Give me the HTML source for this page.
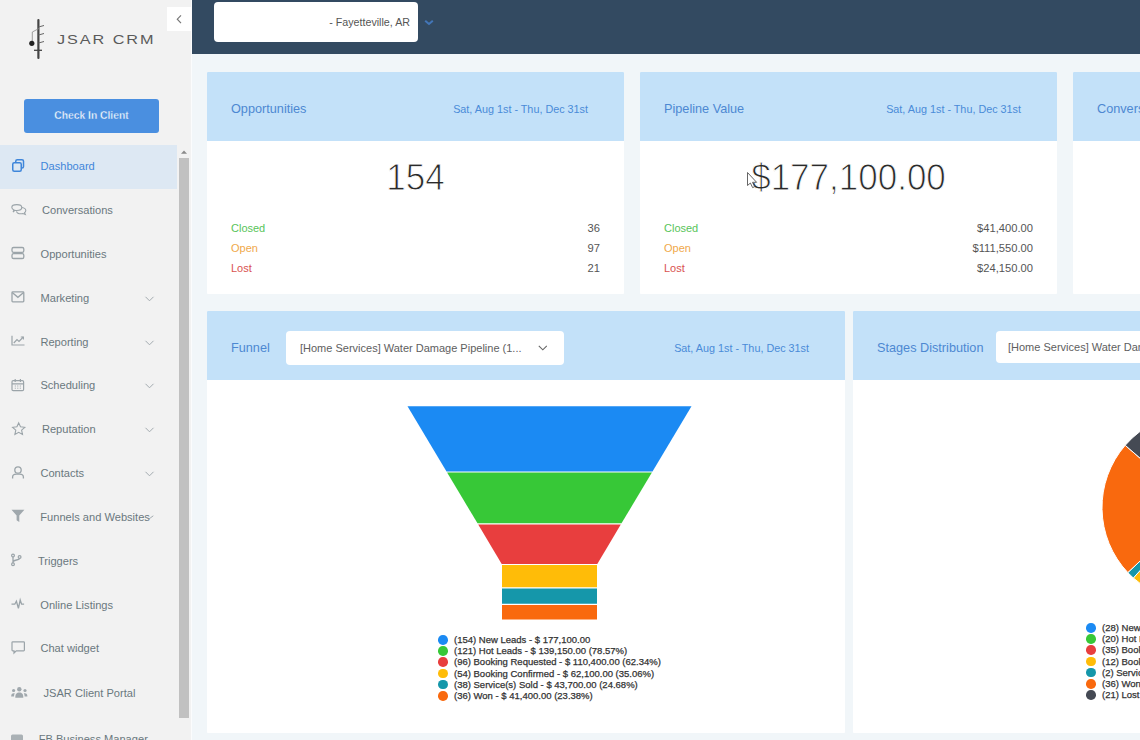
<!DOCTYPE html>
<html>
<head>
<meta charset="utf-8">
<style>
*{margin:0;padding:0;box-sizing:border-box}
html,body{width:1140px;height:740px;overflow:hidden}
body{position:relative;background:#f1f6f9;font-family:"Liberation Sans",sans-serif;color:#555}
.abs{position:absolute}
#sidebar{position:absolute;left:0;top:0;width:191px;height:740px;background:#f2f2f2}
#sideline{position:absolute;left:191px;top:0;width:1px;height:740px;background:#fbfcfd}
#collapse{position:absolute;left:167px;top:7px;width:24px;height:24px;background:#fff}
#checkin{position:absolute;left:24px;top:99px;width:135px;height:34px;background:#4a8fe0;border-radius:3px;color:#fff;font-weight:700;font-size:10.3px;text-align:center;line-height:34px;-webkit-text-stroke:0.35px #4a8fe0}
.nav{position:absolute;left:0;width:177px;height:44px}
.nav .ic{position:absolute;left:11px;top:0;width:16px;height:44px}
.nav .tx{position:absolute;top:-1px;line-height:44px;font-size:11.1px;color:#6a787e;white-space:nowrap}
.nav .chev{position:absolute;left:144px;top:18px}
.nav.active{background:#dde8f3}
.nav.active .tx{color:#3f86da}
#track{position:absolute;left:177px;top:145px;width:14px;height:595px;background:#f2f2f2}
#thumb{position:absolute;left:179px;top:158px;width:10px;height:560px;background:#c1c1c1}
#header{position:absolute;left:192px;top:0;width:948px;height:54px;background:#334a61}
#loc{position:absolute;left:214px;top:2px;width:204px;height:40px;background:#fff;border-radius:4px}
.card{position:absolute;background:#fff;border-radius:1px;overflow:hidden}
.card .hd{position:absolute;left:0;top:0;right:0;height:69px;background:#c3e1f9}
.card .ttl{position:absolute;left:24px;top:0.5px;line-height:72px;font-size:12.7px;color:#4d88d2;white-space:nowrap}
.card .date{position:absolute;right:36px;top:0.5px;line-height:72px;font-size:10.8px;color:#4a8bd8;white-space:nowrap}
.big{position:absolute;left:0;right:0;text-align:center;font-size:35px;color:#2a2a2a;top:84.5px;line-height:40px;-webkit-text-stroke:0.9px #fff;transform:scaleY(1.07);transform-origin:50% 52%}
.row{position:absolute;left:24px;right:24px;height:20px;font-size:11px;line-height:20px}
.row .v{position:absolute;right:0;top:0;color:#555;font-size:11.2px}
.cl{color:#58c45a}.op{color:#f0a94a}.lo{color:#d9534f}
.dd{position:absolute;background:#fff;border-radius:4px;height:34px;line-height:34px;font-size:11px;color:#5e5e5e;white-space:nowrap;overflow:hidden}
.leg{position:absolute;font-size:9.5px;color:#333;line-height:11.2px;white-space:nowrap;font-weight:400;-webkit-text-stroke:0.25px #333}
.leg div{position:relative;padding-left:11px}
.leg i{position:absolute;left:-4.8px;top:1px;width:9.6px;height:9.6px;border-radius:50%}
</style>
</head>
<body>
<div id="sidebar"></div>
<div id="sideline"></div>
<div id="collapse"><svg width="24" height="24" viewBox="0 0 24 24"><path d="M14 15.3 L10.3 19.2 L14 23.1" transform="translate(0,-7)" fill="none" stroke="#777" stroke-width="1.2"/></svg></div>

<!-- logo -->
<svg class="abs" style="left:25px;top:15px" width="135" height="50" viewBox="0 0 135 50">
  <rect x="12.3" y="4" width="2.2" height="40" rx="1" fill="#444"/>
  <path d="M13.5 12 L19 10.5 M13.5 20 L19 18.5 M13.5 28 L19 26.5" stroke="#666" stroke-width="1" fill="none"/>
  <path d="M9 35.3 L17 35.3" stroke="#444" stroke-width="1.3"/>
  <path d="M7.3 28 L7.3 17 L14 13.5" stroke="#888" stroke-width="0.8" fill="none"/>
  <circle cx="6.8" cy="28.3" r="2.6" fill="#222"/>
  <text x="32" y="28.9" font-family="Liberation Sans" font-size="12.4" fill="#5a5a5a" textLength="98.5" lengthAdjust="spacingAndGlyphs" style="letter-spacing:1.5px">JSAR CRM</text>
</svg>

<div id="checkin">Check In Client</div>

<div class="nav active" style="top:145px"><span class="tx" style="left:40.5px">Dashboard</span></div>
<div class="nav" style="top:189px"><span class="tx" style="left:42.0px">Conversations</span></div>
<div class="nav" style="top:233px"><span class="tx" style="left:40.5px">Opportunities</span></div>
<div class="nav" style="top:277px"><span class="tx" style="left:40.5px">Marketing</span></div>
<div class="nav" style="top:321px"><span class="tx" style="left:40.4px">Reporting</span></div>
<div class="nav" style="top:364px"><span class="tx" style="left:40.4px">Scheduling</span></div>
<div class="nav" style="top:408px"><span class="tx" style="left:41.9px">Reputation</span></div>
<div class="nav" style="top:452px"><span class="tx" style="left:40.4px">Contacts</span></div>
<div class="nav" style="top:496px"><span class="tx" style="left:40.3px">Funnels and Websites</span></div>
<div class="nav" style="top:540px"><span class="tx" style="left:37.9px">Triggers</span></div>
<div class="nav" style="top:584px"><span class="tx" style="left:40.3px">Online Listings</span></div>
<div class="nav" style="top:627px"><span class="tx" style="left:40.4px">Chat widget</span></div>
<div class="nav" style="top:672px"><span class="tx" style="left:43.5px">JSAR Client Portal</span></div>
<div class="nav" style="top:718px"><span class="tx" style="left:38.7px">FB Business Manager</span></div>
<svg class="abs" style="left:0;top:0" width="191" height="740"><g fill="none" stroke="#a3abb0" stroke-width="1"><path d="M145.5 296.8 L149.5 300.8 L153.5 296.8"/><path d="M145.5 340.8 L149.5 344.8 L153.5 340.8"/><path d="M145.5 383.8 L149.5 387.8 L153.5 383.8"/><path d="M145.5 427.8 L149.5 431.8 L153.5 427.8"/><path d="M145.5 471.8 L149.5 475.8 L153.5 471.8"/><path d="M148.5 519.3 L150.8 517.6 L153.3 515.8"/></g></svg>
<svg class="abs" style="left:0;top:0" width="191" height="740">
<g fill="none" stroke="#3f86da" stroke-width="1.5">
 <rect x="12.75" y="162.75" width="8.5" height="8.5" rx="1.5"/>
 <path d="M15.75 162.75 V161.25 a1.5 1.5 0 0 1 1.5 -1.5 H22 a1.5 1.5 0 0 1 1.5 1.5 V166.5 a1.5 1.5 0 0 1 -1.5 1.5 H21.25"/>
</g>
<g fill="none" stroke="#9ba4a9" stroke-width="1.1">
 <path d="M13.1 212 L13.9 209.9 C12.5 209.2 11.8 208.2 11.8 207.3 C11.8 205.6 13.9 204.6 16.8 204.6 C19.7 204.6 21.8 205.7 21.8 207.5 C21.8 209.3 19.7 210.5 16.8 210.5 C16.1 210.5 15.4 210.4 14.8 210.3 Z"/>
 <path d="M21.7 207.5 C24.1 207.8 25.8 208.9 25.8 210.5 C25.8 211.4 25.2 212.2 24.5 212.7 L25.3 214.4 L23 213.5 C22.4 213.7 21.8 213.8 21 213.8 C18.6 213.8 16.9 212.8 16.5 211.3"/>
 <rect x="12" y="247.5" width="11.8" height="4.8" rx="1.6" stroke-width="1.3"/>
 <rect x="12" y="253.7" width="11.8" height="4.8" rx="1.6" stroke-width="1.3"/>
 <rect x="12" y="291.9" width="11.8" height="9.9" rx="0.8" stroke-width="1.3"/>
 <path d="M12.2 292.4 L17.9 297.3 L23.6 292.4" stroke-width="1.3"/>
 <path d="M12 335.8 V345 H24.5" stroke-width="1.2"/>
 <path d="M13.8 343 L17 339.6 L19 341.4 L23.3 337" stroke-width="1.2"/>
 <path d="M20.8 337 H23.4 V339.6" stroke-width="1.1"/>
 <rect x="12" y="380.6" width="11.6" height="10" rx="1.2" stroke-width="1.2"/>
 <path d="M12 383.8 H23.6 M15.2 379 V382 M20.4 379 V382" stroke-width="1.2"/>
 <path d="M14.8 386 h1 M17.3 386 h1 M19.8 386 h1 M14.8 388.2 h1 M17.3 388.2 h1 M19.8 388.2 h1" stroke-width="1"/>
 <path d="M18.7 422.9 L20.5 426.8 L24.8 427.3 L21.6 430.2 L22.5 434.5 L18.7 432.3 L14.9 434.5 L15.8 430.2 L12.6 427.3 L16.9 426.8 Z" stroke-width="1.1"/>
 <circle cx="18" cy="470" r="3.2" stroke-width="1.3"/>
 <path d="M12.6 478.5 V477.2 C12.6 475 14.4 474.2 16.3 474.2 H19.7 C21.6 474.2 23.4 475 23.4 477.2 V478.5" stroke-width="1.3"/>
 <path d="M13 556.5 V563 M13 562 C13 559.5 19.6 560.5 19.6 558.3" stroke-width="1.3"/>
 <circle cx="13" cy="555.6" r="1.4" stroke-width="1.2"/>
 <circle cx="19.6" cy="557" r="1.4" stroke-width="1.2"/>
 <circle cx="13" cy="564.2" r="1.4" stroke-width="1.2"/>
 <path d="M11.5 604.2 H14.8 L16.4 601.3 L18.4 608.3 L20.2 600 L21.6 604.2 H24.1" stroke-width="1.3"/>
 <path d="M12.8 641.8 H23.6 a0.8 0.8 0 0 1 0.8 0.8 V650 a0.8 0.8 0 0 1 -0.8 0.8 H16.3 L14 653 V650.8 H12.8 a0.8 0.8 0 0 1 -0.8 -0.8 V642.6 a0.8 0.8 0 0 1 0.8 -0.8 Z" stroke-width="1.2"/>
</g>
<g fill="#a0a8ad">
 <path d="M11.5 509.7 H24.4 L19.3 515.6 V521.9 L16.6 520.3 V515.6 Z"/>
 <circle cx="19.3" cy="689.2" r="2.2"/>
 <path d="M15.3 697.7 C15.3 694 16.6 692.6 19.3 692.6 C22 692.6 23.3 694 23.3 697.7 Z"/>
 <circle cx="13.6" cy="690.5" r="1.6"/>
 <circle cx="25" cy="690.5" r="1.6"/>
 <path d="M11.2 696.6 C11.2 694.2 12 693.2 13.8 693.2 L14.8 693.3 C14.2 694.2 14 695.3 14 696.6 Z"/>
 <path d="M27.4 696.6 C27.4 694.2 26.6 693.2 24.8 693.2 L23.8 693.3 C24.4 694.2 24.6 695.3 24.6 696.6 Z"/>
 <rect x="11" y="734.5" width="12" height="12" rx="1.5" fill="#aab1b5"/>
</g>
</svg>
<div id="track"></div>
<svg class="abs" style="left:180px;top:148px" width="8" height="8"><path d="M1 5.8 L4 2.5 L7 5.8 Z" fill="#8a8a8a"/></svg>
<div id="thumb"></div>

<div id="header"></div>
<div id="loc"></div>
<div class="abs" style="left:214px;top:1.7px;width:196px;height:40px;line-height:40px;text-align:right;font-size:10.7px;color:#555">- Fayetteville, AR</div>
<svg class="abs" style="left:424px;top:19px" width="10" height="7"><path d="M1.2 1.8 L5 5 L8.8 1.8" fill="none" stroke="#4376b8" stroke-width="2"/></svg>

<div class="card" style="left:207px;top:72px;width:417px;height:222px">
 <div class="hd"></div>
 <div class="ttl">Opportunities</div>
 <div class="date">Sat, Aug 1st - Thu, Dec 31st</div>
 <div class="big">154</div>
 <div class="row" style="top:146px"><span class="cl">Closed</span><span class="v">36</span></div>
 <div class="row" style="top:166px"><span class="op">Open</span><span class="v">97</span></div>
 <div class="row" style="top:186px"><span class="lo">Lost</span><span class="v">21</span></div>
</div>
<div class="card" style="left:640px;top:72px;width:417px;height:222px">
 <div class="hd"></div>
 <div class="ttl">Pipeline Value</div>
 <div class="date">Sat, Aug 1st - Thu, Dec 31st</div>
 <div class="big">$177,100.00</div>
 <div class="row" style="top:146px"><span class="cl">Closed</span><span class="v">$41,400.00</span></div>
 <div class="row" style="top:166px"><span class="op">Open</span><span class="v">$111,550.00</span></div>
 <div class="row" style="top:186px"><span class="lo">Lost</span><span class="v">$24,150.00</span></div>
</div>
<div class="card" style="left:1073px;top:72px;width:417px;height:222px">
 <div class="hd"></div>
 <div class="ttl">Conversion Rate</div>
</div>
<div class="card" style="left:207px;top:311px;width:638px;height:422px">
 <div class="hd"></div>
 <div class="ttl">Funnel</div>
 <div class="dd" style="left:79px;top:19.5px;width:278px;padding-left:14px">[Home Services] Water Damage Pipeline (1...<svg class="abs" style="right:16px;top:14px" width="10" height="6"><path d="M0.8 0.8 L4.8 4.8 L8.8 0.8" fill="none" stroke="#666" stroke-width="1.1"/></svg></div>
 <div class="date">Sat, Aug 1st - Thu, Dec 31st</div>
</div>
<div class="card" style="left:853px;top:311px;width:638px;height:422px">
 <div class="hd"></div>
 <div class="ttl">Stages Distribution</div>
 <div class="dd" style="left:143px;top:20px;width:300px;padding-left:12px;height:32px;line-height:32px">[Home Services] Water Damage Pipeline (154)</div>
</div>
<svg class="abs" style="left:0;top:0" width="1140" height="740"><polygon fill="#1b8af3" points="407.5,406.3 691.5,406.3 652.5,471.5 446.5,471.5"/><polygon fill="#37c837" points="447.1,472.6 651.9,472.6 621.5,523.3 477.5,523.3"/><polygon fill="#e83e3e" points="478.2,524.5 620.8,524.5 597.3,563.9 501.7,563.9"/><polygon fill="#ffbc08" points="502.0,565.0 597.0,565.0 597.0,587.2 502.0,587.2"/><polygon fill="#1597aa" points="502.0,588.5 597.0,588.5 597.0,603.8 502.0,603.8"/><polygon fill="#f9690e" points="502.0,605.0 597.0,605.0 597.0,619.6 502.0,619.6"/><path fill="#1b8af3" stroke="#fff" stroke-width="1" d="M1197,507.5 L1197.00,412.50 A95,95 0 0 1 1283.42,468.04 Z"/><path fill="#37c837" stroke="#fff" stroke-width="1" d="M1197,507.5 L1283.42,468.04 A95,95 0 0 1 1284.95,543.41 Z"/><path fill="#e83e3e" stroke="#fff" stroke-width="1" d="M1197,507.5 L1284.95,543.41 A95,95 0 0 1 1173.98,599.67 Z"/><path fill="#ffbc08" stroke="#fff" stroke-width="1" d="M1197,507.5 L1173.98,599.67 A95,95 0 0 1 1133.34,578.01 Z"/><path fill="#1597aa" stroke="#fff" stroke-width="1" d="M1197,507.5 L1133.34,578.01 A95,95 0 0 1 1127.80,572.59 Z"/><path fill="#f9690e" stroke="#fff" stroke-width="1" d="M1197,507.5 L1127.80,572.59 A95,95 0 0 1 1125.20,445.29 Z"/><path fill="#454a54" stroke="#fff" stroke-width="1" d="M1197,507.5 L1125.20,445.29 A95,95 0 0 1 1197.00,412.50 Z"/><path d="M747.5,172.5 L747.5,185.5 L750.4,183 L752.6,187.6 L754.6,186.7 L752.5,182.3 L756.6,182.3 Z" fill="#fff" stroke="#555" stroke-width="0.9" stroke-linejoin="round"/></svg>
<div class="leg" style="left:443px;top:634px"><div><i style="background:#1b8af3"></i>(154) New Leads - $ 177,100.00</div><div><i style="background:#37c837"></i>(121) Hot Leads - $ 139,150.00 (78.57%)</div><div><i style="background:#e83e3e"></i>(96) Booking Requested - $ 110,400.00 (62.34%)</div><div><i style="background:#ffbc08"></i>(54) Booking Confirmed - $ 62,100.00 (35.06%)</div><div><i style="background:#1597aa"></i>(38) Service(s) Sold - $ 43,700.00 (24.68%)</div><div><i style="background:#f9690e"></i>(36) Won - $ 41,400.00 (23.38%)</div></div><div class="leg" style="left:1091px;top:622px"><div><i style="background:#1b8af3"></i>(28) New Leads</div><div><i style="background:#37c837"></i>(20) Hot Leads</div><div><i style="background:#e83e3e"></i>(35) Booking Requested</div><div><i style="background:#ffbc08"></i>(12) Booking Confirmed</div><div><i style="background:#1597aa"></i>(2) Service(s) Sold</div><div><i style="background:#f9690e"></i>(36) Won</div><div><i style="background:#454a54"></i>(21) Lost</div></div>
</body>
</html>
